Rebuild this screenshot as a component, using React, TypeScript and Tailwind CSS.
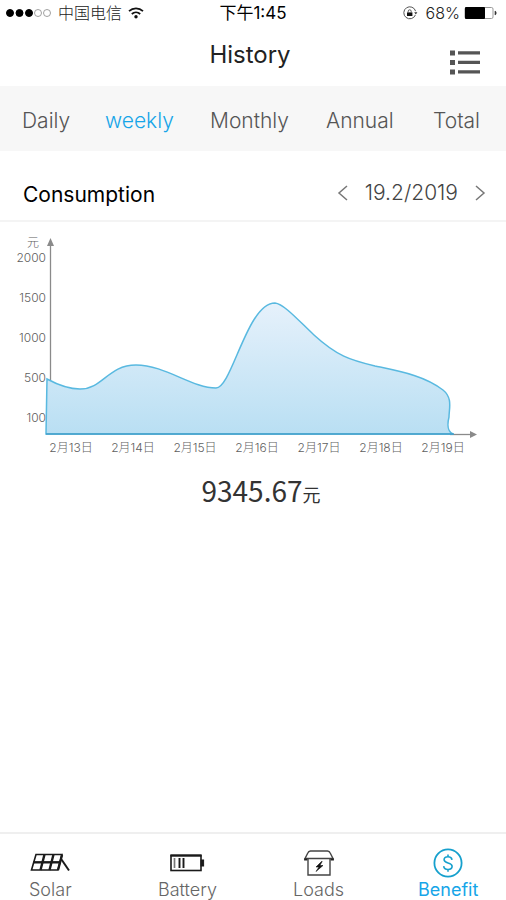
import React from 'react'

const tabs = ['Daily', 'weekly', 'Monthly', 'Annual', 'Total']

const yTicks = [
  { label: '2000', y: 37 },
  { label: '1500', y: 77 },
  { label: '1000', y: 117 },
  { label: '500', y: 157 },
  { label: '100', y: 197 },
]

const xTicks = ['2月13日', '2月14日', '2月15日', '2月16日', '2月17日', '2月18日', '2月19日']

const WifiIcon = () => (
  <svg className="w-4 h-3" viewBox="0 0 16 12" fill="none" stroke="#111" strokeWidth="1.7">
    <path d="M1 4.2c4-3.8 10-3.8 14 0" />
    <path d="M3.8 7c2.4-2.2 6-2.2 8.4 0" />
    <circle cx="8" cy="9.7" r="1.7" fill="#111" stroke="none" />
  </svg>
)

const LockIcon = () => (
  <svg className="w-4 h-4" viewBox="0 0 16 16" fill="none" stroke="#555" strokeWidth="1">
    <path d="M13.6 6.2A6 6 0 1 0 13.4 10" />
    <path d="M12.2 7.2h3.2L13.8 9.6z" fill="#333" stroke="none" />
    <rect x="5" y="7.4" width="5.4" height="3.6" fill="#111" stroke="none" />
    <path d="M6.2 7.4V6.3a1.5 1.5 0 0 1 3 0v1.1" stroke="#555" />
  </svg>
)

const BatteryLevel = () => (
  <svg className="w-[34px] h-[14px]" viewBox="0 0 34 14" fill="none">
    <rect x="1" y="1.5" width="28" height="11" rx="1.5" stroke="#999" />
    <rect x="1" y="1" width="20" height="12" rx="1" fill="#000" />
    <path d="M31 5c1.6.3 1.6 3.7 0 4z" fill="#333" stroke="#333" strokeWidth=".6" />
  </svg>
)

const SolarIcon = () => (
  <svg className="w-10 h-5" viewBox="0 0 40 20" fill="none" stroke="#1a1a1a" strokeWidth="1.6">
    <path d="M6 1.5h26l-4 15.5H1.500z" />
    <path d="M3.500 9.300h27" strokeWidth="2.4" />
    <path d="M14.500 1.500l-4 15.500M23.500 1.500l-4 15.500M32 2l-4 15" strokeWidth="2.4" />
    <path d="M31.500 6.500l7.500 11" strokeWidth="2" />
  </svg>
)

const BatteryIcon = () => (
  <svg className="w-9 h-5" viewBox="0 0 36 20" fill="none" stroke="#1a1a1a">
    <rect x="2" y="2.5" width="30" height="15" strokeWidth="1.6" />
    <path d="M1.5 2.5h31" strokeWidth="2.2" />
    <path d="M5.5 5v10" stroke="#777" strokeWidth="1.7" />
    <path d="M10.5 5v10M14.5 5v10" strokeWidth="1.9" />
    <rect x="32" y="7" width="2.6" height="6" fill="#1a1a1a" />
  </svg>
)

const LoadsIcon = () => (
  <svg className="w-8 h-7" viewBox="0 0 32 28" fill="none" stroke="#444" strokeWidth="1.4">
    <path d="M7.5 2h17q2 .2 2.7 2l2.8 5.5H2L4.8 4Q5.5 2.2 7.5 2z" />
    <path d="M2 9.5v1.2h2.5M30 9.5v1.2h-2.5" stroke="#222" strokeWidth="1.8" />
    <path d="M5 10v16h22V10" />
    <path d="M18.500 12.500l-5.500 5.500h3l-3 4.500 7-6h-3.200l2.400-4z" fill="#111" stroke="#111" strokeWidth=".6" />
  </svg>
)

const BenefitIcon = () => (
  <svg className="w-8 h-8" viewBox="0 0 32 32" fill="none" stroke="#16a0cd" strokeWidth="1.8">
    <circle cx="16" cy="16" r="13.6" />
    <path d="M20 12.8c-.3-2-1.8-3-4-3s-3.9 1.1-3.9 3c0 4.2 8 2.2 8 6.5 0 2-1.7 3.2-4.1 3.2s-4.1-1.2-4.3-3.3M16 7.5v2.3M16 22.5v2.3" strokeWidth="1.6" />
  </svg>
)

const navItems = [
  { label: 'Solar', icon: <SolarIcon /> },
  { label: 'Battery', icon: <BatteryIcon /> },
  { label: 'Loads', icon: <LoadsIcon /> },
  { label: 'Benefit', icon: <BenefitIcon /> },
]

const ConsumptionChart: React.FC = () => (
  <svg className="w-full h-auto block" viewBox="0 0 506 240" role="img" aria-label="Consumption">
    <defs>
      <linearGradient id="area" x1="0" y1="0" x2="0" y2="1">
        <stop offset="0" stopColor="#e6f1fb" />
        <stop offset="1" stopColor="#b9dff3" />
      </linearGradient>
    </defs>

    {/* 坐标轴 */}
    <g stroke="#8a8a8a" fill="#8a8a8a" strokeWidth="1.3">
      <path d="M50.5 19V209" />
      <path d="M50.5 13l3.5 8h-7z" strokeWidth="0" />
      <path d="M450 209.5H471" />
      <path d="M477 209.5l-7-3.5v7z" strokeWidth="0" />
    </g>

    {/* 面积曲线 */}
    <path
      d="M47 154C60 161 69 164 80 164C103 164 108 140 136 140C165 140 192 163 216 163C232 163 247 78 275 78C284 79 298 95 314 110C337 131 350 135 375 141C403 147 425 151 443 165C453 173 449 184 449 192C447 200 448 207 453 209H46Z"
      fill="url(#area)"
      stroke="#59b9e0"
      strokeWidth="1.5"
    />
    <path d="M46 209H454" stroke="#439fca" strokeWidth="1.5" />

    <g fill="#606060" fontSize="12" fontWeight="300" className="font-[Inter,'Noto_Sans_CJK_SC',sans-serif]">
      <text x="39" y="22" textAnchor="end">元</text>
      {yTicks.map((t) => (
        <text key={t.label} x="46" y={t.y} textAnchor="end">{t.label}</text>
      ))}
      {xTicks.map((label, i) => (
        <text key={label} x={71 + i * 62} y="227" textAnchor="middle">{label}</text>
      ))}
    </g>
  </svg>
)

export default function App() {
  return (
    <div className="min-h-screen flex flex-col bg-white font-[Inter,'Noto_Sans_CJK_SC',sans-serif] font-light text-[#222]">
      {/* 状态栏 */}
      <div className="h-[26px] grid grid-cols-[1fr_auto_1fr] items-center px-[6px] text-base leading-5">
        <div className="flex items-center gap-[6px]">
          <svg className="w-[46px] h-[10px]" viewBox="0 0 46 10" stroke="#000">
            <circle cx="4" cy="5" r="3.5" />
            <circle cx="13.5" cy="5" r="3.5" />
            <circle cx="23" cy="5" r="3.5" />
            <circle cx="32" cy="5" r="3.5" fill="none" stroke="#888" strokeWidth=".8" />
            <circle cx="41" cy="5" r="3.5" fill="none" stroke="#888" strokeWidth=".8" />
          </svg>
          <span>中国电信</span>
          <WifiIcon />
        </div>
        <span className="text-[17px] font-normal text-black">下午1:45</span>
        <div className="flex items-center justify-end gap-1 pr-[2px]">
          <LockIcon />
          <span className="ml-1">68%</span>
          <BatteryLevel />
        </div>
      </div>

      {/* 标题 */}
      <header className="h-[60px] grid grid-cols-[1fr_auto_1fr] items-center pl-5 pr-[26px]">
        <h1 className="col-start-2 pb-[2px] text-2xl font-normal">History</h1>
        <button className="justify-self-end pt-3" aria-label="Menu">
          <svg className="w-[30px] h-[25px]" viewBox="0 0 30 25" fill="#555">
            <path d="M0 .5h5v5H0zM0 10h5v5H0zM0 19.5h5v5H0zM8 1.2h22v3.3H8zM8 10.7h22V14H8zM8 20.2h22v3.3H8z" />
          </svg>
        </button>
      </header>

      <nav className="h-[65px] pt-1 pl-[22px] grid grid-cols-[83fr_105fr_116fr_107fr_73fr] items-center bg-[#f7f7f7] text-[21px] text-[#555]">
        {tabs.map((tab) => (
          <button key={tab} className={`justify-self-start ${tab === 'weekly' ? 'text-[#16a5e8]' : ''}`}>
            {tab}
          </button>
        ))}
      </nav>

      <main className="flex-1">
        <div className="h-[71px] flex items-center justify-between pt-[18px] pl-[23px] pr-5 border-b-2 border-[#f4f4f4]">
          <h2 className="text-[21px] font-normal text-black">Consumption</h2>
          <div className="flex items-center gap-4 pb-1 text-[21px] text-[#444]">
            <button aria-label="Previous">
              <svg className="w-3 h-4" viewBox="0 0 12 16" fill="none" stroke="#777" strokeWidth="1.5">
                <path d="M10 1L2 8l8 7" />
              </svg>
            </button>
            <span>19.2/2019</span>
            <button aria-label="Next">
              <svg className="w-3 h-4" viewBox="0 0 12 16" fill="none" stroke="#777" strokeWidth="1.5">
                <path d="M2 1l8 7-8 7" />
              </svg>
            </button>
          </div>
        </div>

        <div className="pt-[3px]">
          <ConsumptionChart />
        </div>

        <p className="pl-4 pt-[3px] text-center text-[28px] leading-[44px] font-normal text-[#333] font-['Noto_Sans_CJK_SC',sans-serif]">
          9345.67<span className="text-lg">元</span>
        </p>
      </main>

      {/* 底部导航 */}
      <nav className="h-[68px] pl-[29px] grid grid-cols-[129fr_135fr_125fr_88fr] border-t-2 border-[#efefef] text-lg leading-5 text-[#666]">
        {navItems.map((item) => (
          <button
            key={item.label}
            className={`justify-self-start flex flex-col items-center pt-3 ${item.label === 'Benefit' ? 'text-[#16a5e8] font-normal' : ''}`}
          >
            <span className="h-[34px] flex items-center">{item.icon}</span>
            {item.label}
          </button>
        ))}
      </nav>
    </div>
  )
}
